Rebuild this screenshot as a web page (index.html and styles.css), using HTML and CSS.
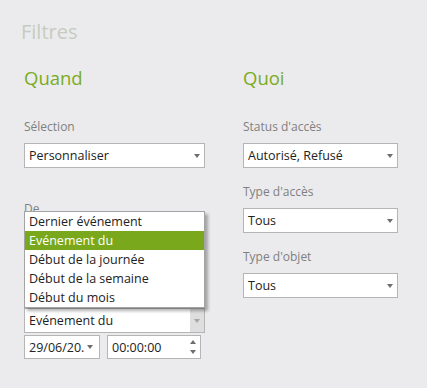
FILE: index.html
```html
<!DOCTYPE html>
<html lang="fr">
<head>
    <meta charset="UTF-8">
    <meta name="viewport" content="width=device-width, initial-scale=1.0">
    <title>Filtres</title>
    <link rel="stylesheet" href="styles.css">
</head>
<body>
    <div class="page">
        <h1 class="title">Filtres</h1>

        <div class="columns">
            <div class="column when">
                <h2>Quand</h2>

                <div class="field">
                    <label>Sélection</label>
                    <div class="select"><span>Personnaliser</span><i class="arrow"></i></div>
                </div>

                <div class="field field-from">
                    <label>De</label>
                    <div class="select open">
                        <ul class="options">
                            <li>Dernier événement</li>
                            <li class="active">Evénement du</li>
                            <li>Début de la journée</li>
                            <li>Début de la semaine</li>
                            <li>Début du mois</li>
                        </ul>
                        <span>Evénement du</span>
                        <span class="button"><i class="arrow"></i></span>
                    </div>
                    <div class="datetime">
                        <div class="input date"><span>29/06/20.</span><i class="arrow"></i></div>
                        <div class="input time">
                            <span>00:00:00</span>
                            <span class="spin"><i class="up"></i><i class="down"></i></span>
                        </div>
                    </div>
                </div>
            </div>

            <div class="column what">
                <h2>Quoi</h2>

                <div class="field">
                    <label>Status d'accès</label>
                    <div class="select"><span>Autorisé, Refusé</span><i class="arrow"></i></div>
                </div>

                <div class="field">
                    <label>Type d'accès</label>
                    <div class="select"><span>Tous</span><i class="arrow"></i></div>
                </div>

                <div class="field">
                    <label>Type d'objet</label>
                    <div class="select"><span>Tous</span><i class="arrow"></i></div>
                </div>
            </div>
        </div>
    </div>
</body>
</html>
```

FILE: styles.css
```css
body {
    margin: 0;
    background: #ebebed;
    font-family: "Open Sans", "Noto Sans", sans-serif;
    color: #222;
}
.page {
    padding: 20px 0 0 21px;
}
.title {
    margin: 0;
    font-size: 20px;
    font-weight: normal;
    line-height: 24px;
    color: #c6ccbf;
}
.columns {
    display: flex;
}
.column h2 {
    margin: 22px 0 29px;
    font-size: 18.5px;
    font-weight: normal;
    line-height: 24px;
    color: #7aab22;
}
.when {
    width: 181px;
    margin-left: 3px;
}
.what {
    width: 155px;
    margin-left: 38px;
}
.field {
    margin-bottom: 16px;
}
.field label {
    display: block;
    font-size: 12px;
    line-height: 16px;
    color: #808080;
    margin-bottom: 8px;
}
.field-from {
    margin-top: 33px;
}
.field-from label {
    margin-bottom: 91px;
}
.select {
    position: relative;
    display: flex;
    align-items: center;
    height: 25px;
    box-sizing: border-box;
    border: 1px solid #b5b5b5;
    background: #fff;
    padding-left: 4px;
    font-size: 12.5px;
}
.select span {
    flex: 1;
}
.arrow {
    width: 0;
    height: 0;
    border-left: 3.5px solid transparent;
    border-right: 3.5px solid transparent;
    border-top: 4px solid #6e6e6e;
    margin-right: 4px;
}
.select.open .button {
    flex: none;
    align-self: stretch;
    width: 14px;
    display: flex;
    align-items: center;
    justify-content: center;
    background: #dedede;
}
.select.open .button .arrow {
    margin: 0;
    border-top-color: #a5a5a5;
}
.options {
    position: absolute;
    left: -1px;
    right: -1px;
    bottom: 24px;
    margin: 0;
    padding: 0;
    list-style: none;
    background: #fff;
    border: 1px solid #a3a3a3;
    box-shadow: 3px 3px 3px rgba(0, 0, 0, 0.3);
}
.options li {
    height: 19px;
    line-height: 19px;
    padding-left: 4px;
    font-size: 12.5px;
}
.options li.active {
    background: #79a81c;
    color: #fff;
}
.datetime {
    display: flex;
    gap: 7px;
    margin-top: 2px;
}
.input {
    display: flex;
    align-items: center;
    height: 24px;
    box-sizing: border-box;
    border: 1px solid #b5b5b5;
    background: #fff;
    padding-left: 4px;
    font-size: 12.5px;
}
.input span {
    flex: 1;
}
.date {
    width: 76px;
}
.date .arrow {
    margin-right: 6px;
}
.time {
    width: 94px;
}
.spin {
    flex: none !important;
    display: flex;
    flex-direction: column;
    justify-content: space-between;
    height: 14px;
    margin-right: 4px;
}
.spin i {
    width: 0;
    height: 0;
    border-left: 3.5px solid transparent;
    border-right: 3.5px solid transparent;
}
.spin .up {
    border-bottom: 4px solid #6e6e6e;
}
.spin .down {
    border-top: 4px solid #6e6e6e;
}
```
